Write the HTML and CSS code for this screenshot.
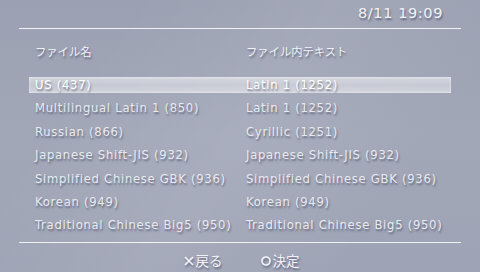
FILE: index.html
```html
<!DOCTYPE html>
<html lang="ja">
<head>
<meta charset="utf-8">
<title>エンコード設定</title>
<link rel="stylesheet" href="styles.css">
</head>
<body>
<div class="screen">
  <div class="top"><span class="clock">8/11 19:09</span></div>
  <div class="rule"></div>
  <div class="heads">
    <span>ファイル名</span>
    <span>ファイル内テキスト</span>
  </div>
  <div class="list">
    <div class="row sel"><span>US (437)</span><span>Latin 1 (1252)</span></div>
    <div class="row"><span>Multilingual Latin 1 (850)</span><span>Latin 1 (1252)</span></div>
    <div class="row"><span>Russian (866)</span><span>Cyrillic (1251)</span></div>
    <div class="row"><span>Japanese Shift-JIS (932)</span><span>Japanese Shift-JIS (932)</span></div>
    <div class="row"><span>Simplified Chinese GBK (936)</span><span>Simplified Chinese GBK (936)</span></div>
    <div class="row"><span>Korean (949)</span><span>Korean (949)</span></div>
    <div class="row"><span>Traditional Chinese Big5 (950)</span><span>Traditional Chinese Big5 (950)</span></div>
  </div>
  <div class="rule bottom"></div>
  <div class="foot">
    <span class="btn"><svg class="ico" viewBox="0 0 10 10"><path d="M1 1 L9 9 M9 1 L1 9" stroke="#f4f4f8" stroke-width="1.7" fill="none"/></svg>戻る</span>
    <span class="btn"><svg class="ico" viewBox="0 0 10 10"><circle cx="5" cy="5" r="4" stroke="#f4f4f8" stroke-width="1.7" fill="none"/></svg>決定</span>
  </div>
</div>
</body>
</html>
```
FILE: styles.css
```css
html, body {
  margin: 0;
  padding: 0;
}
body {
  width: 480px;
  height: 272px;
  overflow: hidden;
  font-family: "DejaVu Sans", "Noto Sans CJK JP", sans-serif;
  color: #e9eaf0;
}
.screen {
  width: 480px;
  height: 272px;
  background:
    linear-gradient(125deg, rgba(255,255,255,0) 20%, rgba(255,255,255,0.08) 50%, rgba(255,255,255,0) 80%),
    linear-gradient(180deg, #9ba0b2 0%, #a2a7b8 50%, #9ea3b5 100%);
  display: flex;
  flex-direction: column;
  text-shadow: 1px 2px 2px rgba(45, 50, 80, 0.55);
}
.top {
  height: 28px;
  display: flex;
  justify-content: flex-end;
  align-items: center;
  padding-right: 37px;
}
.clock {
  font-size: 14.5px;
  letter-spacing: 0.6px;
  color: #f2f2f6;
  margin-top: -2px;
}
.rule {
  height: 1px;
  margin: 0 19px;
  background: #f0f1f5;
  flex: none;
}
.heads {
  display: grid;
  grid-template-columns: 211px 1fr;
  padding-left: 35px;
  margin-top: 14px;
  height: 16px;
  line-height: 16px;
  font-size: 11.3px;
  font-family: "Noto Sans CJK JP", sans-serif;
  color: #f2f2f6;
}
.list {
  margin-top: 18px;
  display: flex;
  flex-direction: column;
  gap: 7.4px;
}
.row {
  display: grid;
  grid-template-columns: 211px 1fr;
  margin: 0 29px;
  padding-left: 6px;
  height: 16px;
  line-height: 16px;
  font-size: 11.6px;
  letter-spacing: 0.72px;
  white-space: nowrap;
  box-sizing: border-box;
}
.row.sel {
  background: linear-gradient(180deg, rgba(255,255,255,0.55), rgba(255,255,255,0.4) 50%, rgba(255,255,255,0.52));
  box-shadow: inset 0 0 2px 1px rgba(255,255,255,0.35);
  color: #ffffff;
}
.bottom {
  margin-top: 9px;
}
.foot {
  flex: 1;
  display: flex;
  justify-content: center;
  align-items: center;
  gap: 38px;
  font-family: "Noto Sans CJK JP", sans-serif;
  font-size: 13.5px;
  line-height: 16px;
  color: #f2f2f6;
  padding-left: 3px;
  padding-top: 5px;
}
.btn {
  display: flex;
  align-items: center;
  gap: 2px;
}
.ico {
  width: 10px;
  height: 10px;
  margin-top: 2px;
  filter: drop-shadow(1px 2px 1px rgba(45, 50, 80, 0.5));
}
```
